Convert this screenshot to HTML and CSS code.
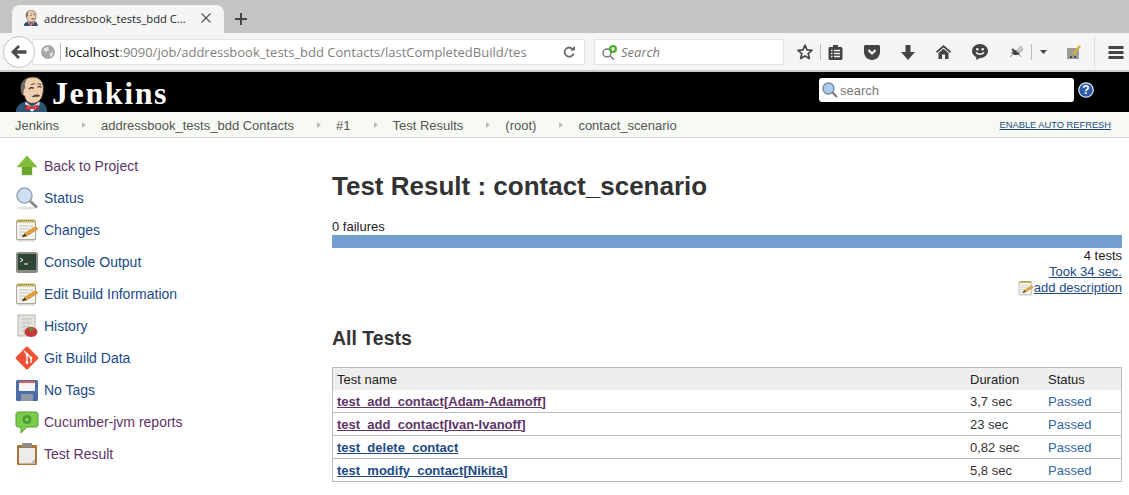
FILE: index.html
```html
<!DOCTYPE html>
<html>
<head>
  <title>addressbook_tests_bdd Contacts</title>
  <link rel="stylesheet" href="styles.css">
</head>
<body>
  <svg class="defs" width="0" height="0">
    <defs>
      <g id="jenkins-head">
        <path d="M1 38 C1 32 5 29 11 27 L27 27 C31 29 34 32 34 38 Z" fill="#2f5575"/>
        <path d="M11 27 L18 33 L26 27 L26 30 L18 38 L11 30 Z" fill="#eee"/>
        <path d="M7 13 C6 5 12 1 19 1 C27 1 31 7 30 15 C30 22 26 29 19 29 C14 29 11 26 10 21 C8 21 6 18 7 13 Z" fill="#efcfae" stroke="#3a2a22" stroke-width="1"/>
        <path d="M9 20 C5 17 5 9 8 6 C10 4 12 3 13 3 C10 7 10 10 11 13 C9 13 9 17 9 20 Z" fill="#6e6a68"/>
        <path d="M15 14 C16 12 18 12 20 13 M24 12 C25 11 27 11 28 12" fill="none" stroke="#2a1d18" stroke-width="1.2"/>
        <path d="M17 9 L21 8 M24 8 L28 9" stroke="#4a3a30" stroke-width="1"/>
        <path d="M18 22 C20 19 24 19 26 20 C27 22 24 22 22 22 C20 22 19 23 18 22 Z" fill="#4a4440"/>
        <path d="M12 30 L18 33 L24 30 L25 36 L18 34.5 L11 36 Z" fill="#d0262b"/>
        <circle cx="14" cy="33" r=".6" fill="#fff"/>
        <circle cx="22" cy="33" r=".6" fill="#fff"/>
      </g>
      <g id="notepad-icon">
        <path d="M1.5 3 H20.5 V21.5 H1.5 Z" fill="#f6f6f0" stroke="#a8a8a0"/>
        <path d="M2 22 H20 V23.5 H2 Z" fill="#d8d8d4"/>
        <path d="M2 1.5 H20 V4.5 H2 Z" fill="#c9b564"/>
        <path d="M3 2.5 H19" stroke="#8a7a38" stroke-width="1" stroke-dasharray="1 1"/>
        <path d="M4 8 H18 M4 11 H15 M4 14 H11 M4 17 H8" stroke="#c4c4bc" stroke-width="1"/>
        <path d="M8 18.5 L9.5 15.5 L20.5 8.5 L23 11 L11.5 18 Z" fill="#eea030" stroke="#9a6420" stroke-width=".5"/>
        <path d="M6.5 19.5 L9.5 15.5 L11.5 18 Z" fill="#4a3320"/>
      </g>
    </defs>
  </svg>

  <div class="tab-strip">
    <div class="tab">
      <svg class="tab-icon" viewBox="0 0 36 38"><use href="#jenkins-head"/></svg>
      <span class="tab-title">addressbook_tests_bdd C...</span>
      <svg class="tab-close" viewBox="0 0 10 10"><path d="M.5 .5 L9.5 9.5 M9.5 .5 L.5 9.5" stroke="#555" stroke-width="1.1"/></svg>
    </div>
    <svg class="tab-new" viewBox="0 0 12 12"><path d="M6 0 V12 M0 6 H12" stroke="#444" stroke-width="2"/></svg>
  </div>

  <div class="toolbar">
    <div class="back-btn">
      <svg viewBox="0 0 16 14" width="16" height="14"><path d="M7 0 L0 7 L7 14 L9 12 L5.6 8.7 H15.5 V5.3 H5.6 L9 2 Z" fill="#4a4a4a"/></svg>
    </div>
    <div class="url-bar">
      <svg class="globe" viewBox="0 0 14 14"><circle cx="7" cy="7" r="7" fill="#a9a9a9"/><path d="M3 3 L7 2 L8 5 L5 7 L3 6 Z M9 8 L12 7 L11 11 L9 12 Z" fill="#e4e4e4"/></svg>
      <span class="url-text"><span class="url-host">localhost</span>:9090/job/addressbook_tests_bdd Contacts/lastCompletedBuild/tes</span>
      <svg class="reload" viewBox="0 0 12 12"><path d="M10 3.5 A4.6 4.6 0 1 0 10.6 7.5" fill="none" stroke="#6a6a6a" stroke-width="1.8"/><path d="M7 4.5 H12 V0 Z" fill="#6a6a6a"/></svg>
    </div>
    <div class="search-bar">
      <svg class="search-glass" viewBox="0 0 17 15" width="17" height="15">
        <circle cx="6" cy="8" r="4" fill="none" stroke="#777" stroke-width="1.4"/>
        <path d="M9 11 L13 14.5" stroke="#777" stroke-width="1.6"/>
        <circle cx="12" cy="4" r="4" fill="#4fae2e"/>
        <path d="M12 2 V6 M10 4 H14" stroke="#fff" stroke-width="1.2"/>
      </svg>
      <span class="search-hint">Search</span>
    </div>
    <div class="tool-icons">
      <svg class="tool star" viewBox="0 0 16 16" width="16" height="16"><path d="M8 1.2 L10 5.9 L15 6.3 L11.2 9.6 L12.4 14.6 L8 12 L3.6 14.6 L4.8 9.6 L1 6.3 L6 5.9 Z" fill="none" stroke="#444" stroke-width="1.7" stroke-linejoin="round"/></svg>
      <span class="tool-sep sep-a"></span>
      <svg class="tool list" viewBox="0 0 14 16" width="15" height="16"><path d="M1.5 3 H4.5 V1 H9.5 V3 H12.5 C13.3 3 14 3.7 14 4.5 V14.5 C14 15.3 13.3 16 12.5 16 H1.5 C.7 16 0 15.3 0 14.5 V4.5 C0 3.7 .7 3 1.5 3 Z" fill="#444"/><path d="M2.5 6.5 H4 M5.5 6.5 H11.5 M2.5 9.5 H4 M5.5 9.5 H11.5 M2.5 12.5 H4 M5.5 12.5 H11.5" stroke="#f5f5f5" stroke-width="1.4"/></svg>
      <svg class="tool pocket" viewBox="0 0 16 15" width="16" height="15"><path d="M1.5 0 H14.5 C15.3 0 16 .7 16 1.5 V7 C16 11.4 12.4 15 8 15 C3.6 15 0 11.4 0 7 V1.5 C0 .7 .7 0 1.5 0 Z" fill="#444"/><path d="M4.5 5 L8 8.5 L11.5 5" fill="none" stroke="#f5f5f5" stroke-width="2.2"/></svg>
      <svg class="tool down" viewBox="0 0 14 15" width="14" height="15"><path d="M4.5 0 H9.5 V7 H14 L7 15 L0 7 H4.5 Z" fill="#444"/></svg>
      <svg class="tool home" viewBox="0 0 15 14" width="15" height="14"><path d="M7.5 0 L15 6.5 L14 8 L7.5 2.5 L1 8 L0 6.5 Z M2.5 8 L7.5 3.8 L12.5 8 V14 H9 V9.5 H6 V14 H2.5 Z" fill="#444"/></svg>
      <svg class="tool smile" viewBox="0 0 15 15" width="16" height="16"><path d="M7.5 0 C11.6 0 15 2.9 15 6.6 C15 10.3 11.6 13.2 7.5 13.2 L4 15 V12.4 C1.6 11.3 0 9.1 0 6.6 C0 2.9 3.4 0 7.5 0 Z" fill="#444"/><circle cx="5" cy="5" r="1.2" fill="#f5f5f5"/><circle cx="10" cy="5" r="1.2" fill="#f5f5f5"/><path d="M3.8 8 C5.5 10.2 9.5 10.2 11.2 8" fill="none" stroke="#f5f5f5" stroke-width="1.3"/></svg>
      <svg class="tool bug" viewBox="0 0 16 14" width="16" height="14"><path d="M2 12 L7 7 M4 4 L8 7 M10 8 L13 12 M3 8 L7 8" stroke="#888" stroke-width="1"/><ellipse cx="8" cy="7.5" rx="3.5" ry="2.6" fill="#444"/><path d="M8 6 L13 1 L15 5 L11 8 Z" fill="#c8c8c8" stroke="#888" stroke-width=".5"/><circle cx="5" cy="5" r="1.4" fill="#555"/></svg>
      <span class="tool-sep sep-b"></span>
      <svg class="tool caret" viewBox="0 0 7 4" width="7" height="4"><path d="M0 0 H7 L3.5 4 Z" fill="#444"/></svg>
      <svg class="tool sc" viewBox="0 0 16 16" width="16" height="16"><path d="M1 4 H13 V15 H1 Z" fill="#9c9c94"/><path d="M6 10 L13 1 L15 2.5 L8 11 Z" fill="#d8b23a"/><path d="M4 13 H6 M8 13 H10" stroke="#333" stroke-width="1.4"/></svg>
      <span class="tool-sep sep-c"></span>
      <svg class="tool menu" viewBox="0 0 15 13" width="16" height="13"><path d="M0 0 H15 V3 H0 Z M0 5 H15 V8 H0 Z M0 10 H15 V13 H0 Z" fill="#444"/></svg>
    </div>
  </div>

  <header class="jenkins-head">
    <a class="logo">
      <svg class="butler" viewBox="0 0 36 38"><use href="#jenkins-head"/></svg>
      <span class="logo-text">Jenkins</span>
    </a>
    <div class="head-search">
      <svg class="search-mag" viewBox="0 0 16 16" width="16" height="16"><circle cx="6.5" cy="6.5" r="5.5" fill="#a9cdf0" stroke="#7d8b98" stroke-width="1.4"/><path d="M10.5 10.5 L15 15" stroke="#777" stroke-width="2"/></svg>
      <span class="head-search-hint">search</span>
    </div>
    <svg class="help" viewBox="0 0 16 16" width="16" height="16"><circle cx="8" cy="8" r="7.2" fill="#2a5aa8" stroke="#dfe8f4" stroke-width="1.2"/><text x="8" y="12" text-anchor="middle" class="help-q">?</text></svg>
  </header>

  <nav class="breadcrumbs">
    <a class="crumb crumb-first">Jenkins</a>
    <span class="arrow"></span>
    <a class="crumb">addressbook_tests_bdd Contacts</a>
    <span class="arrow"></span>
    <a class="crumb">#1</a>
    <span class="arrow"></span>
    <a class="crumb">Test Results</a>
    <span class="arrow"></span>
    <a class="crumb">(root)</a>
    <span class="arrow"></span>
    <a class="crumb">contact_scenario</a>
    <a class="auto-refresh">ENABLE AUTO REFRESH</a>
  </nav>

  <div class="page">
    <aside class="side">
      <a class="task visited">
        <svg viewBox="0 0 24 24"><path d="M12 2 L22 13 H17 V21 H7 V13 H2 Z" fill="#6aa52b" stroke="#7fb644" stroke-width=".5"/><path d="M12 2 L22 13 H2 Z" fill="#82bd3c"/></svg>
        Back to Project
      </a>
      <a class="task">
        <svg viewBox="0 0 24 24"><ellipse cx="12" cy="22" rx="10" ry="1.6" fill="#e4e4e4"/><circle cx="9.5" cy="9.5" r="7.5" fill="#cfe0f2" stroke="#98a6b4" stroke-width="1.6"/><path d="M15 15 L22 21.5" stroke="#8c8c8c" stroke-width="3"/></svg>
        Status
      </a>
      <a class="task">
        <svg viewBox="0 0 24 24"><use href="#notepad-icon"/></svg>
        Changes
      </a>
      <a class="task">
        <svg viewBox="0 0 24 24"><rect x="1" y="2" width="22" height="21" rx="2.5" fill="#8c8c84"/><rect x="3" y="4" width="18" height="16" fill="#2c4535"/><path d="M5 8 L8 10 L5 12" fill="none" stroke="#fff" stroke-width="1"/><path d="M9 14 H13" stroke="#fff" stroke-width="1"/></svg>
        Console Output
      </a>
      <a class="task">
        <svg viewBox="0 0 24 24"><use href="#notepad-icon"/></svg>
        Edit Build Information
      </a>
      <a class="task">
        <svg viewBox="0 0 24 24"><rect x="3" y="1" width="17" height="21" fill="#e3e3e0" stroke="#b4b4b0"/><path d="M6 5 H17 M6 9 H17 M6 13 H17 M6 17 H17 M9 3 V20 M13 3 V20" stroke="#c0c0bc" stroke-width=".8"/><ellipse cx="16" cy="18" rx="6.5" ry="5" fill="#c63a3a"/><path d="M16 18 L14 13.5 L19 14 Z" fill="#4f9c3a"/></svg>
        History
      </a>
      <a class="task">
        <svg viewBox="0 0 24 24"><rect x="3.5" y="3.5" width="17" height="17" rx="1.5" transform="rotate(45 12 12)" fill="#f05133"/><path d="M9 5 L16 12 V17 M12 8 V16" fill="none" stroke="#fff" stroke-width="1.3"/><circle cx="12" cy="8.5" r="1.4" fill="#fff"/><circle cx="12" cy="16.5" r="1.4" fill="#fff"/><circle cx="16" cy="12" r="1.4" fill="#fff"/></svg>
        Git Build Data
      </a>
      <a class="task">
        <svg viewBox="0 0 24 24"><rect x="1" y="2" width="22" height="21" rx="1.5" fill="#4a6fa8"/><rect x="4" y="3" width="16" height="10" fill="#f4f4f4"/><path d="M4 4 H20" stroke="#d83a2a" stroke-width="1.6"/><rect x="6" y="16" width="12" height="7" fill="#8f99a8"/></svg>
        No Tags
      </a>
      <a class="task visited">
        <svg viewBox="0 0 24 24"><path d="M3 2 H21 C22 2 23 3 23 4 V15 C23 16 22 17 21 17 H12 L6 23 V17 H3 C2 17 1 16 1 15 V4 C1 3 2 2 3 2 Z" fill="#7ccb4a" stroke="#53a02b"/><circle cx="12" cy="9.5" r="4.5" fill="#4f9c33"/><circle cx="12" cy="9.5" r="1.7" fill="#8ad65a"/></svg>
        Cucumber-jvm reports
      </a>
      <a class="task visited">
        <svg viewBox="0 0 24 24"><rect x="2" y="3" width="20" height="20" rx="1" fill="#a9753a"/><rect x="4" y="6" width="16" height="15.5" fill="#ececea"/><path d="M20 21.5 H15 L20 17 Z" fill="#bdbdb8"/><rect x="7" y="1" width="10" height="4.5" rx="1" fill="#8c8c88"/></svg>
        Test Result
      </a>
    </aside>

    <main class="main">
      <h1 class="title">Test Result : contact_scenario</h1>
      <div class="fail-count">0 failures</div>
      <div class="bar"></div>
      <div class="summary">
        <div>4 tests</div>
        <div><a class="link">Took 34 sec.</a></div>
        <div class="add-desc">
          <svg viewBox="0 0 24 24" width="16" height="16"><use href="#notepad-icon"/></svg><a class="link">add description</a>
        </div>
      </div>
      <h2 class="subtitle">All Tests</h2>
      <table class="results">
        <thead>
          <tr><th class="col-name">Test name</th><th class="col-dur">Duration</th><th class="col-status">Status</th></tr>
        </thead>
        <tbody>
          <tr><td><a class="test visited">test_add_contact[Adam-Adamoff]</a></td><td>3,7 sec</td><td class="passed">Passed</td></tr>
          <tr><td><a class="test visited">test_add_contact[Ivan-Ivanoff]</a></td><td>23 sec</td><td class="passed">Passed</td></tr>
          <tr><td><a class="test">test_delete_contact</a></td><td>0,82 sec</td><td class="passed">Passed</td></tr>
          <tr><td><a class="test">test_modify_contact[Nikita]</a></td><td>5,8 sec</td><td class="passed">Passed</td></tr>
        </tbody>
      </table>
    </main>
  </div>
</body>
</html>
```

FILE: styles.css
```css
html, body {
  margin: 0;
  height: 495px;
  overflow: hidden;
}

body {
  font-family: "Liberation Sans", Arial, sans-serif;
  font-size: 14px;
  color: #333;
  background-color: white;
}

.defs {
  display: block;
  height: 0;
}

/* browser chrome */
.tab-strip {
  height: 33px;
  background-color: #c4c4c4;
  display: flex;
  align-items: flex-end;
  padding-left: 12px;
}

.tab {
  width: 212px;
  height: 28px;
  box-sizing: border-box;
  background-color: #f5f5f5;
  border-radius: 8px 8px 0 0;
  display: flex;
  align-items: center;
  padding: 0 0 2px 11px;
}

.tab-icon {
  width: 16px;
  height: 16px;
}

.tab-title {
  font-family: "Open Sans", sans-serif;
  font-size: 11.2px;
  color: #222;
  margin-left: 5px;
  width: 152px;
  white-space: nowrap;
}

.tab-close {
  width: 10px;
  height: 10px;
  margin-left: 5px;
}

.tab-new {
  width: 12px;
  height: 12px;
  margin: 0 0 8px 11px;
}

.toolbar {
  height: 36px;
  padding-top: 1px;
  background-color: #f5f5f5;
  border-bottom: 2px solid #c9c9c9;
  display: flex;
  align-items: center;
}

.back-btn {
  width: 30px;
  height: 30px;
  border: 1px solid #c4c4c4;
  border-radius: 50%;
  background-color: white;
  display: flex;
  align-items: center;
  justify-content: center;
  margin-left: 3px;
  flex: none;
  z-index: 1;
}

.url-bar {
  width: 553px;
  height: 26px;
  margin-left: -3px;
  box-sizing: border-box;
  background-color: white;
  border: 1px solid #e4e4e4;
  display: flex;
  align-items: center;
  padding-left: 8px;
  flex: none;
}

.globe {
  width: 14px;
  height: 14px;
  flex: none;
}

.url-text {
  font-family: "Open Sans", sans-serif;
  font-size: 13px;
  color: #808080;
  border-left: 1px solid #bbb;
  margin-left: 5px;
  padding-left: 4px;
  width: 463px;
  overflow: hidden;
  white-space: nowrap;
  flex: none;
}

.url-host {
  color: #111;
}

.reload {
  width: 12px;
  height: 12px;
  margin-left: 35px;
  flex: none;
}

.search-bar {
  width: 190px;
  height: 26px;
  box-sizing: border-box;
  margin-left: 9px;
  background-color: white;
  border: 1px solid #e4e4e4;
  display: flex;
  align-items: center;
  padding-left: 6px;
  flex: none;
}

.search-hint {
  font-family: "Open Sans", sans-serif;
  font-style: italic;
  font-size: 13px;
  color: #777;
  margin-left: 3px;
}

.tool-icons {
  display: flex;
  align-items: center;
  flex: 1;
  height: 100%;
  margin-left: 13px;
}

.tool {
  flex: none;
}

.tool-sep {
  width: 1px;
  height: 16px;
  background-color: #bbb;
  flex: none;
}

.sep-a { margin: 0 7px; }
.pocket { margin-left: 21px; }
.down { margin-left: 21px; }
.home { margin-left: 21px; }
.smile { margin-left: 21px; }
.bug { margin-left: 20px; }
.sep-b { margin-left: 7px; }
.caret { margin-left: 8px; }
.sc { margin-left: 19px; }
.sep-c { margin-left: 12px; height: 36px; background-color: #e2e2e2; }
.menu { margin-left: 13px; }

/* jenkins header */
.jenkins-head {
  height: 40px;
  background-color: black;
  display: flex;
  align-items: center;
}

.logo {
  display: flex;
  align-items: flex-end;
  height: 100%;
  margin-left: 15px;
}

.butler {
  width: 34px;
  height: 36px;
  display: block;
}

.logo-text {
  font-family: "Liberation Serif", serif;
  font-weight: bold;
  font-size: 32px;
  color: white;
  line-height: 38px;
  margin-left: 3px;
  letter-spacing: 1.6px;
}

.head-search {
  width: 255px;
  height: 24px;
  box-sizing: border-box;
  background-color: white;
  border-radius: 3px;
  margin: 0 0 4px auto;
  display: flex;
  align-items: center;
  padding-left: 3px;
}

.head-search-hint {
  font-size: 13px;
  color: #777;
  margin-left: 2px;
}

.help {
  margin: 0 35px 4px 4px;
}

.help-q {
  font-family: "Liberation Sans", sans-serif;
  font-weight: bold;
  font-size: 12px;
  fill: white;
}

.breadcrumbs {
  height: 24px;
  padding: 1px 18px 0 15px;
  background-color: #f6faf2;
  border-bottom: 1px solid #d3d7cf;
  display: flex;
  align-items: center;
  font-size: 13px;
  color: #555;
}

.crumb {
  white-space: nowrap;
}

.arrow {
  width: 0;
  height: 0;
  border-left: 4px solid #bbb;
  border-top: 3.5px solid transparent;
  border-bottom: 3.5px solid transparent;
  margin: 0 15px 0 23px;
}

.auto-refresh {
  margin-left: auto;
  font-size: 9.3px;
  color: #204a87;
  text-decoration: underline;
}

/* page */
.page {
  display: flex;
}

.side {
  width: 332px;
  flex: none;
  padding-top: 12px;
  box-sizing: border-box;
}

.task {
  display: flex;
  align-items: center;
  height: 32px;
  padding-left: 15px;
  color: #204a87;
  font-size: 14px;
}

.task.visited {
  color: #5c3566;
}

.task svg {
  width: 24px;
  height: 24px;
  margin-right: 5px;
  flex: none;
}

.main {
  width: 790px;
  flex: none;
}

.title {
  font-size: 26px;
  line-height: 30px;
  font-weight: bold;
  color: #333;
  margin: 33px 0 0;
}

.fail-count {
  font-size: 13px;
  color: #222;
  margin-top: 19px;
  line-height: 14px;
}

.bar {
  height: 13px;
  background-color: #729fcf;
  margin-top: 1px;
}

.summary {
  font-size: 13px;
  color: #222;
  text-align: right;
  line-height: 16px;
}

.link {
  color: #204a87;
  text-decoration: underline;
}

.add-desc {
  display: flex;
  justify-content: flex-end;
  align-items: center;
}

.subtitle {
  font-size: 19.5px;
  line-height: 22px;
  font-weight: bold;
  color: #333;
  margin: 31px 0 0;
}

.results {
  width: 100%;
  border-collapse: collapse;
  border: 1px solid #bbb;
  margin-top: 18px;
  font-size: 13px;
}

.results th {
  background-color: #eee;
  color: #222;
  font-weight: normal;
  text-align: left;
  height: 22px;
  padding: 0 4px;
}

.results td {
  border-bottom: 1px solid #bbb;
  height: 22px;
  padding: 0 4px;
  color: #333;
}

.col-dur {
  width: 70px;
}

.col-status {
  width: 69px;
}

.results .passed {
  color: #3465a4;
}

.test {
  font-weight: bold;
  color: #204a87;
  text-decoration: underline;
}

.test.visited {
  color: #5c3566;
}
```
